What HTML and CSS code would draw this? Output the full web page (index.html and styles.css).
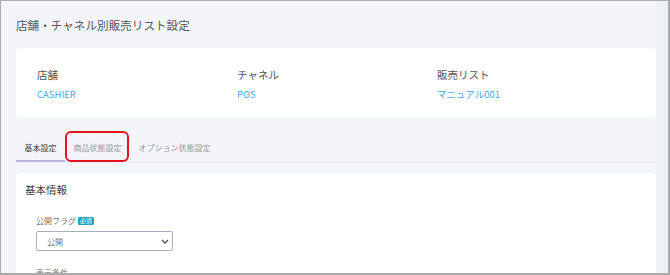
FILE: index.html
```html
<!DOCTYPE html>
<html lang="ja">
<head>
    <meta charset="UTF-8">
    <meta name="viewport" content="width=device-width, initial-scale=1.0">
    <title>店舗・チャネル別販売リスト設定</title>
    <link rel="stylesheet" href="styles.css">
</head>
<body>
    <div class="frame">
        <div class="main">
            <div class="title">店舗・チャネル別販売リスト設定</div>
            <div class="summary">
                <div class="item">
                    <div class="label">店舗</div>
                    <div class="value">CASHIER</div>
                </div>
                <div class="item">
                    <div class="label">チャネル</div>
                    <div class="value">POS</div>
                </div>
                <div class="item">
                    <div class="label">販売リスト</div>
                    <div class="value">マニュアル001</div>
                </div>
            </div>
            <div class="tabs">
                <div class="tab active">基本設定</div>
                <div class="tab marked">商品状態設定</div>
                <div class="tab">オプション状態設定</div>
            </div>
            <div class="panel">
                <div class="panelTitle">基本情報</div>
                <div class="field">
                    <div class="fieldLabel">公開フラグ <span class="badge">必須</span></div>
                    <div class="select">
                        <span>公開</span>
                        <svg width="8" height="5" viewBox="0 0 8 5"><path d="M1 1 L4 4 L7 1" fill="none" stroke="#555" stroke-width="1.4"/></svg>
                    </div>
                </div>
                <div class="field next">
                    <div class="fieldLabel">表示条件</div>
                </div>
            </div>
        </div>
        <div class="track"></div>
    </div>
</body>
</html>
```

FILE: styles.css
```css
body {
    margin: 0;
    font-family: "Noto Sans CJK JP", "Noto Sans", sans-serif;
}
.frame {
    width: 670px;
    height: 275px;
    box-sizing: border-box;
    border: 1px solid #ababab;
    border-right-width: 2px;
    border-bottom-width: 2px;
    background: #f4f5f9;
    display: flex;
    overflow: hidden;
}
.main {
    width: 640px;
    padding-left: 15px;
}
.track {
    flex: 1;
    background: #eff0f5;
}
.title {
    height: 47px;
    display: flex;
    align-items: center;
    font-size: 11.6px;
    color: #555;
}
.summary {
    height: 69px;
    box-sizing: border-box;
    background: #fff;
    border-radius: 3px;
    padding: 20px 21px 0;
    display: grid;
    grid-template-columns: 200px 200px 200px;
}
.label {
    font-size: 10.5px;
    line-height: 14px;
    color: #555;
}
.value {
    font-size: 9.5px;
    line-height: 12px;
    margin-top: 6px;
    color: #4ea7ee;
}
.tabs {
    display: flex;
    border-bottom: 1px solid #e7e9f1;
}
.tab {
    padding: 25px 8.5px 6px;
    font-size: 8px;
    line-height: 12px;
    color: #9a9a9a;
    border-bottom: 2px solid transparent;
    margin-bottom: -1px;
}
.tab.active {
    color: #444;
    border-bottom-color: #bab6e8;
}
.marked {
    position: relative;
}
.marked::after {
    content: "";
    position: absolute;
    top: 14px;
    bottom: -2px;
    left: 0;
    right: 1px;
    border: 2px solid #e3141b;
    border-radius: 6px;
}
.panel {
    margin-top: 11px;
    background: #fff;
    border-radius: 3px 3px 0 0;
    padding: 9px 0 0 9px;
    height: 120px;
}
.panelTitle {
    font-size: 10.5px;
    line-height: 15px;
    color: #444;
}
.field {
    margin-top: 18px;
    padding-left: 11px;
}
.field.next {
    margin-top: 16px;
}
.fieldLabel {
    font-size: 8px;
    line-height: 12px;
    color: #777;
    display: flex;
    align-items: center;
    gap: 2px;
}
.badge {
    display: inline-block;
    background: #1fa0ba;
    color: #fff;
    font-size: 6px;
    line-height: 8px;
    padding: 0 2px;
    border-radius: 1.5px;
}
.select {
    margin-top: 4px;
    width: 137px;
    height: 20px;
    box-sizing: border-box;
    border: 1px solid #a9afc1;
    border-radius: 2px;
    display: flex;
    align-items: center;
    justify-content: space-between;
    padding: 0 3px 0 10px;
    font-size: 8px;
    color: #777;
}
```
